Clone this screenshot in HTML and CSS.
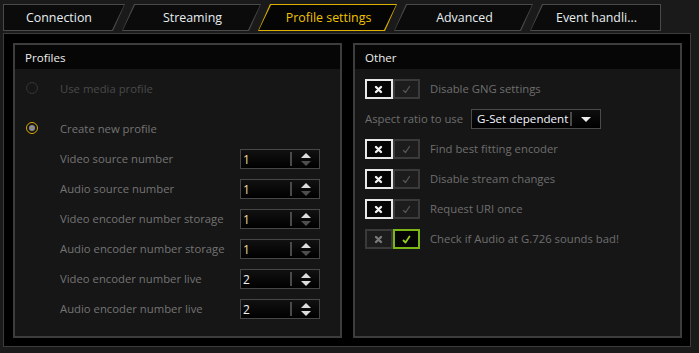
FILE: index.html
```html
<!DOCTYPE html>
<html lang="en">
<head>
    <meta charset="UTF-8">
    <title>Profile settings</title>
    <link rel="stylesheet" href="styles.css">
</head>
<body>
    <div class="tabs">
        <div class="tab tab-first"><span>Connection</span></div>
        <div class="tab"><span>Streaming</span></div>
        <div class="tab active"><span>Profile settings</span></div>
        <div class="tab"><span>Advanced</span></div>
        <div class="tab tab-last"><span>Event handli...</span></div>
    </div>

    <div class="panel">
        <section class="group">
            <div class="group-head">Profiles</div>
            <div class="group-body profiles">
                <div class="row radio-row">
                    <span class="radio"></span>
                    <span class="label disabled">Use media profile</span>
                </div>
                <div class="row radio-row second">
                    <span class="radio checked"></span>
                    <span class="label">Create new profile</span>
                </div>

                <div class="row spin-row">
                    <span class="label">Video source number</span>
                    <div class="spin">
                        <span class="spin-value">1</span>
                        <span class="spin-sep"></span>
                        <span class="spin-arrows"><i class="up"></i><i class="down off"></i></span>
                    </div>
                </div>
                <div class="row spin-row">
                    <span class="label">Audio source number</span>
                    <div class="spin">
                        <span class="spin-value">1</span>
                        <span class="spin-sep"></span>
                        <span class="spin-arrows"><i class="up"></i><i class="down off"></i></span>
                    </div>
                </div>
                <div class="row spin-row">
                    <span class="label">Video encoder number storage</span>
                    <div class="spin">
                        <span class="spin-value">1</span>
                        <span class="spin-sep"></span>
                        <span class="spin-arrows"><i class="up"></i><i class="down off"></i></span>
                    </div>
                </div>
                <div class="row spin-row">
                    <span class="label">Audio encoder number storage</span>
                    <div class="spin">
                        <span class="spin-value">1</span>
                        <span class="spin-sep"></span>
                        <span class="spin-arrows"><i class="up"></i><i class="down off"></i></span>
                    </div>
                </div>
                <div class="row spin-row">
                    <span class="label">Video encoder number live</span>
                    <div class="spin">
                        <span class="spin-value two">2</span>
                        <span class="spin-sep"></span>
                        <span class="spin-arrows"><i class="up"></i><i class="down"></i></span>
                    </div>
                </div>
                <div class="row spin-row">
                    <span class="label">Audio encoder number live</span>
                    <div class="spin">
                        <span class="spin-value two">2</span>
                        <span class="spin-sep"></span>
                        <span class="spin-arrows"><i class="up"></i><i class="down"></i></span>
                    </div>
                </div>
            </div>
        </section>

        <section class="group">
            <div class="group-head">Other</div>
            <div class="group-body other">
                <div class="row">
                    <div class="toggle">
                        <span class="half no on"><svg width="9" height="9" viewBox="0 0 9 9"><path d="M2 2 L7 7 M7 2 L2 7"/></svg></span>
                        <span class="half yes"><svg width="9" height="9" viewBox="0 0 9 9"><path d="M1.5 5.5 L3.5 7.5 L7.5 1.5"/></svg></span>
                    </div>
                    <span class="label">Disable GNG settings</span>
                </div>
                <div class="row">
                    <span class="label aspect">Aspect ratio to use</span>
                    <div class="select">
                        <span class="select-value">G-Set dependent</span>
                        <span class="select-sep"></span>
                        <span class="select-arrow"></span>
                    </div>
                </div>
                <div class="row">
                    <div class="toggle">
                        <span class="half no on"><svg width="9" height="9" viewBox="0 0 9 9"><path d="M2 2 L7 7 M7 2 L2 7"/></svg></span>
                        <span class="half yes"><svg width="9" height="9" viewBox="0 0 9 9"><path d="M1.5 5.5 L3.5 7.5 L7.5 1.5"/></svg></span>
                    </div>
                    <span class="label">Find best fitting encoder</span>
                </div>
                <div class="row">
                    <div class="toggle">
                        <span class="half no on"><svg width="9" height="9" viewBox="0 0 9 9"><path d="M2 2 L7 7 M7 2 L2 7"/></svg></span>
                        <span class="half yes"><svg width="9" height="9" viewBox="0 0 9 9"><path d="M1.5 5.5 L3.5 7.5 L7.5 1.5"/></svg></span>
                    </div>
                    <span class="label">Disable stream changes</span>
                </div>
                <div class="row">
                    <div class="toggle">
                        <span class="half no on"><svg width="9" height="9" viewBox="0 0 9 9"><path d="M2 2 L7 7 M7 2 L2 7"/></svg></span>
                        <span class="half yes"><svg width="9" height="9" viewBox="0 0 9 9"><path d="M1.5 5.5 L3.5 7.5 L7.5 1.5"/></svg></span>
                    </div>
                    <span class="label">Request URI once</span>
                </div>
                <div class="row">
                    <div class="toggle">
                        <span class="half no"><svg width="9" height="9" viewBox="0 0 9 9"><path d="M2 2 L7 7 M7 2 L2 7"/></svg></span>
                        <span class="half yes on"><svg width="9" height="9" viewBox="0 0 9 9"><path d="M1.5 5.5 L3.5 7.5 L7.5 1.5"/></svg></span>
                    </div>
                    <span class="label">Check if Audio at G.726 sounds bad!</span>
                </div>
            </div>
        </section>
    </div>
</body>
</html>
```

FILE: styles.css
```css
* {
    margin: 0;
    padding: 0;
    box-sizing: border-box;
}

body {
    font-family: 'Open Sans', 'Noto Sans', sans-serif;
    font-size: 11.3px;
    background: #1a1a1a;
    color: #6e6e6e;
    padding: 4px 0 0 3px;
}

/* tab strip */

.tabs {
    display: flex;
    height: 27px;
}

.tab {
    position: relative;
    width: 139px;
    margin-left: -3px;
    display: flex;
    align-items: center;
    justify-content: center;
    background: #4a4a4a;
    color: #e8eef2;
    font-size: 12.4px;
    clip-path: polygon(12px 0, 100% 0, calc(100% - 12px) 100%, 0 100%);
}

.tab::before {
    content: '';
    position: absolute;
    inset: 1px;
    background: #0b0b0b;
    clip-path: polygon(12px 0, 100% 0, calc(100% - 12px) 100%, 0 100%);
}

.tab span {
    position: relative;
    padding-left: 2px;
    margin-top: -1px;
}

.tab-first {
    width: 122px;
    margin-left: 0;
    clip-path: polygon(0 0, 100% 0, calc(100% - 12px) 100%, 0 100%);
}

.tab-first::before {
    clip-path: polygon(0 0, 100% 0, calc(100% - 12px) 100%, 0 100%);
}

.tab-first span {
    padding-left: 0;
    padding-right: 10px;
}

.tab-last {
    width: 131px;
    clip-path: polygon(12px 0, 100% 0, 100% 100%, 0 100%);
}

.tab-last::before {
    clip-path: polygon(12px 0, 100% 0, 100% 100%, 0 100%);
}

.tab.active {
    background: #dcb000;
    color: #f0c400;
}

.tab.active::before {
    background: #050505;
}

/* main panel */

.panel {
    margin-top: 2px;
    width: 688px;
    height: 314px;
    background: #000;
    border: 1px solid #3c3c3c;
    padding: 9px 8px 8px 9px;
    display: grid;
    grid-template-columns: 329px 329px;
    gap: 11px;
}

.group {
    border: 2px solid #3d3d3d;
    background: #161616;
    display: flex;
    flex-direction: column;
}

.group-head {
    height: 24px;
    background: #060606;
    color: #eeeeee;
    font-size: 11.6px;
    padding-left: 10px;
    display: flex;
    align-items: center;
}

.group-body {
    padding-top: 10px;
    display: flex;
    flex-direction: column;
    gap: 10px;
}

.row {
    height: 20px;
    display: flex;
    align-items: center;
}

.label {
    white-space: nowrap;
    margin-top: -1px;
}

.label.disabled {
    color: #4a4a4a;
}

/* profiles */

.profiles {
    padding-left: 11px;
}

.profiles .label {
    color: #747474;
}

.profiles .label.disabled {
    color: #4a4a4a;
}

.radio-row {
    gap: 22px;
}

.radio-row.second {
    margin-top: 10px;
}

.radio {
    width: 12px;
    height: 12px;
    border-radius: 50%;
    border: 1px solid #343434;
    margin-top: -3px;
    display: flex;
    align-items: center;
    justify-content: center;
}

.radio.checked {
    border: 1.5px solid #d6aa00;
}

.radio.checked::after {
    content: '';
    width: 6px;
    height: 6px;
    border-radius: 50%;
    background: #8c8c8c;
}

.spin-row {
    padding-left: 34px;
}

.spin-row .label {
    width: 180px;
}

.spin {
    width: 80px;
    height: 20px;
    border: 1px solid #474747;
    background: linear-gradient(#111, #000);
    display: flex;
    align-items: center;
}

.spin-value {
    flex: 1;
    padding-left: 2px;
    color: #f2dc9a;
    font-size: 12px;
}

.spin-value.two {
    color: #f4f4f4;
}

.spin-sep {
    width: 2px;
    height: 14px;
    background: #4a4a4a;
    margin-right: 8px;
}

.spin-arrows {
    width: 12px;
    margin-right: 7px;
    display: flex;
    flex-direction: column;
    align-items: center;
    gap: 3px;
}

.spin-arrows i {
    width: 0;
    height: 0;
    border-left: 5px solid transparent;
    border-right: 5px solid transparent;
}

.spin-arrows .up {
    border-bottom: 5px solid #dcdcdc;
}

.spin-arrows .down {
    border-top: 5px solid #dcdcdc;
}

.spin-arrows .down.off {
    border-top-color: #4e4e4e;
}

/* other */

.other {
    padding-left: 10px;
}

.other .row {
    gap: 10px;
}

.toggle {
    width: 55px;
    height: 20px;
    display: flex;
}

.half {
    flex: 1;
    display: flex;
    align-items: center;
    justify-content: center;
    border: 2px solid #3a3a3a;
    background: #1c1c1c;
}

.half svg {
    fill: none;
    stroke-linecap: round;
    stroke-linejoin: round;
}

.half.no svg {
    stroke: #7a7a7a;
    stroke-width: 2.4;
}

.half.yes svg {
    stroke: #555;
    stroke-width: 1.3;
}

.half.no.on {
    border-color: #e8e8e8;
    background: #050505;
}

.half.no.on svg {
    stroke: #f2f2f2;
}

.half.yes.on {
    border-color: #7cb518;
    background: #050505;
}

.half.yes.on svg {
    stroke: #92cc1e;
    stroke-width: 1.8;
}

.label.aspect {
    width: 96px;
}

.select {
    width: 130px;
    height: 20px;
    border: 1px solid #4a4a4a;
    background: linear-gradient(#0e0e0e, #000);
    display: flex;
    align-items: center;
}

.select-value {
    flex: 1;
    padding-left: 5px;
    color: #f4f6ff;
    font-size: 11.6px;
    white-space: nowrap;
    margin-top: -1px;
}

.select-sep {
    width: 2px;
    height: 14px;
    background: #4a4a4a;
    margin-right: 9px;
}

.select-arrow {
    width: 0;
    height: 0;
    border-left: 5px solid transparent;
    border-right: 5px solid transparent;
    border-top: 5px solid #eeeeee;
    margin-right: 9px;
}
```
